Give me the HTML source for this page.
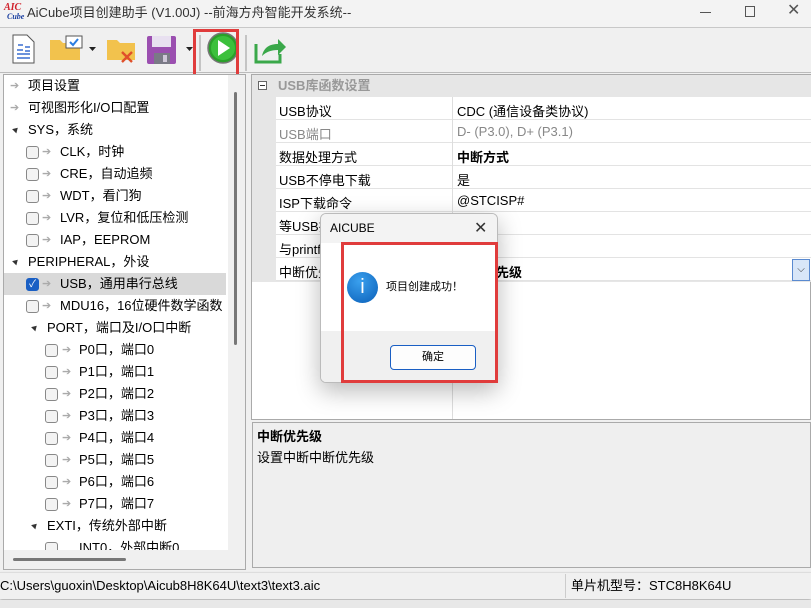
<!DOCTYPE html>
<html><head><meta charset="utf-8">
<style>
*{margin:0;padding:0;box-sizing:border-box}
body{width:811px;height:608px;background:#f0f0f0;position:relative;overflow:hidden;font-family:"Liberation Sans","Noto Sans CJK SC",sans-serif;font-size:13px;color:#000}
.a{position:absolute}
.t{position:absolute;white-space:nowrap;line-height:16px}
.cb{position:absolute;width:13px;height:13px;border:1px solid #888;border-radius:3px;background:#f3f3f3}
.ar{position:absolute;color:#aaa;font-size:11px}
.tri{position:absolute;width:0;height:0;border-left:3px solid transparent;border-right:3px solid transparent;border-bottom:5px solid #333;transform:rotate(45deg)}
.row{position:absolute;left:276px;width:535px;height:23px;border-bottom:1px solid #e3e3e3;background:#fff}
.row .n{position:absolute;left:3px;top:4px;white-space:nowrap}
.row .v{position:absolute;left:181px;top:4px;white-space:nowrap}
</style></head><body>
<div class="a" style="left:0;top:0;width:811px;height:28px;background:#f3f3f3;border-bottom:1px solid #c8c8c8"></div>
<div class="t" style="left:4px;top:3px;font:bold italic 10px 'Liberation Serif',serif;color:#d0202a;line-height:10px">AIC</div>
<div class="t" style="left:7px;top:13px;font:bold italic 8px 'Liberation Serif',serif;color:#1a3fa0;line-height:8px">Cube</div>
<div class="t" style="left:27px;top:5px;font-size:13px;color:#333">AiCube项目创建助手 (V1.00J) --前海方舟智能开发系统--</div>
<div class="a" style="left:700px;top:12px;width:11px;height:1px;background:#555"></div>
<div class="a" style="left:745px;top:6px;width:10px;height:11px;border:1px solid #555"></div>
<div class="t" style="left:787px;top:3px;font-size:16px;color:#555">✕</div>
<div class="a" style="left:0;top:72px;width:811px;height:1px;background:#bbb"></div>
<svg class="a" style="left:0;top:28px" width="300" height="46">
<path d="M13 7h14l7 7v21H13z" fill="#fff" stroke="#555"/><path d="M18 17h5M17 22h6M17 26h13M17 30h13M25 19h5M25 23h5" stroke="#3a6fd0" stroke-width="1.4"/>
<path d="M50 12h10l3 3h17v17H50z" fill="#f2c24d"/><rect x="66" y="8" width="16" height="12" fill="#fff" stroke="#555"/><path d="M70 14l3 3 5-6" stroke="#2a7de1" stroke-width="2" fill="none"/>
<path d="M89 19h7l-3.5 4z" fill="#222"/>
<path d="M107 12h10l3 3h15v17h-28z" fill="#f2c24d"/><path d="M122 24l10 10M132 24l-10 10" stroke="#e0502a" stroke-width="2.4"/>
<rect x="147" y="8" width="29" height="28" rx="2" fill="#9b4fb0"/><rect x="152" y="8" width="19" height="11" fill="#e8e0f0"/><rect x="154" y="25" width="16" height="11" fill="#7a7a86"/><rect x="163" y="27" width="4" height="7" fill="#cfc8d8"/>
<path d="M186 19h7l-3.5 4z" fill="#222"/>
<path d="M200 7v36M246 7v36" stroke="#999"/>
<circle cx="223" cy="20" r="15" fill="#2aa02a" stroke="#777" stroke-width="1.5"/><circle cx="223" cy="20" r="12" fill="#3cc03c"/><path d="M218 12v16l12-8z" fill="#fff"/>
<path d="M256 16v18h24v-8" stroke="#3aa84a" stroke-width="3" fill="none"/><path d="M262 28c2-9 8-12 16-12v-5l8 8-8 8v-5c-7 0-12 2-16 6z" fill="#3aa84a"/>
</svg>
<div class="a" style="left:193px;top:29px;width:46px;height:49px;border:3px solid #e03c3c"></div>
<div class="a" style="left:3px;top:74px;width:243px;height:496px;border:1px solid #aaa;background:#fff"></div>
<div class="a" style="left:228px;top:75px;width:17px;height:475px;background:#f0f0f0"></div>
<div class="a" style="left:234px;top:92px;width:3px;height:253px;background:#777;border-radius:2px"></div>
<div class="a" style="left:4px;top:550px;width:241px;height:19px;background:#f0f0f0"></div>
<div class="a" style="left:13px;top:558px;width:113px;height:3px;background:#777;border-radius:2px"></div>
<div class="a" style="left:4px;top:273px;width:222px;height:22px;background:#d9d9d9"></div>
<div class="ar" style="left:10px;top:79px">➔</div><div class="t" style="left:28px;top:78px">项目设置</div>
<div class="ar" style="left:10px;top:101px">➔</div><div class="t" style="left:28px;top:100px">可视图形化I/O口配置</div>
<div class="tri" style="left:13px;top:127px"></div><div class="t" style="left:28px;top:122px">SYS，系统</div>
<div class="cb" style="left:26px;top:146px"></div><div class="ar" style="left:42px;top:145px">➔</div><div class="t" style="left:60px;top:144px">CLK，时钟</div>
<div class="cb" style="left:26px;top:168px"></div><div class="ar" style="left:42px;top:167px">➔</div><div class="t" style="left:60px;top:166px">CRE，自动追频</div>
<div class="cb" style="left:26px;top:190px"></div><div class="ar" style="left:42px;top:189px">➔</div><div class="t" style="left:60px;top:188px">WDT，看门狗</div>
<div class="cb" style="left:26px;top:212px"></div><div class="ar" style="left:42px;top:211px">➔</div><div class="t" style="left:60px;top:210px">LVR，复位和低压检测</div>
<div class="cb" style="left:26px;top:234px"></div><div class="ar" style="left:42px;top:233px">➔</div><div class="t" style="left:60px;top:232px">IAP，EEPROM</div>
<div class="tri" style="left:13px;top:259px"></div><div class="t" style="left:28px;top:254px">PERIPHERAL，外设</div>
<div class="cb" style="left:26px;top:278px;background:#1a5fc4;border-color:#1a5fc4;color:#fff;font-size:10px;line-height:11px;text-align:center">✓</div><div class="ar" style="left:42px;top:277px">➔</div><div class="t" style="left:60px;top:276px">USB，通用串行总线</div>
<div class="cb" style="left:26px;top:300px"></div><div class="ar" style="left:42px;top:299px">➔</div><div class="t" style="left:60px;top:298px;width:166px;overflow:hidden">MDU16，16位硬件数学函数</div>
<div class="tri" style="left:32px;top:325px"></div><div class="t" style="left:47px;top:320px">PORT，端口及I/O口中断</div>
<div class="cb" style="left:45px;top:344px"></div><div class="ar" style="left:62px;top:343px">➔</div><div class="t" style="left:79px;top:342px">P0口，端口0</div>
<div class="cb" style="left:45px;top:366px"></div><div class="ar" style="left:62px;top:365px">➔</div><div class="t" style="left:79px;top:364px">P1口，端口1</div>
<div class="cb" style="left:45px;top:388px"></div><div class="ar" style="left:62px;top:387px">➔</div><div class="t" style="left:79px;top:386px">P2口，端口2</div>
<div class="cb" style="left:45px;top:410px"></div><div class="ar" style="left:62px;top:409px">➔</div><div class="t" style="left:79px;top:408px">P3口，端口3</div>
<div class="cb" style="left:45px;top:432px"></div><div class="ar" style="left:62px;top:431px">➔</div><div class="t" style="left:79px;top:430px">P4口，端口4</div>
<div class="cb" style="left:45px;top:454px"></div><div class="ar" style="left:62px;top:453px">➔</div><div class="t" style="left:79px;top:452px">P5口，端口5</div>
<div class="cb" style="left:45px;top:476px"></div><div class="ar" style="left:62px;top:475px">➔</div><div class="t" style="left:79px;top:474px">P6口，端口6</div>
<div class="cb" style="left:45px;top:498px"></div><div class="ar" style="left:62px;top:497px">➔</div><div class="t" style="left:79px;top:496px">P7口，端口7</div>
<div class="tri" style="left:32px;top:523px"></div><div class="t" style="left:47px;top:518px">EXTI，传统外部中断</div>
<div class="a" style="left:4px;top:538px;width:224px;height:12px;overflow:hidden"><div class="cb" style="left:41px;top:4px"></div><div class="t" style="left:75px;top:2px">INT0，外部中断0</div></div>
<div class="a" style="left:251px;top:74px;width:560px;height:346px;border:1px solid #aaa;background:#fff"></div>
<div class="a" style="left:252px;top:75px;width:559px;height:207px;background:#e6e6e6"></div>
<div class="a" style="left:258px;top:81px;width:9px;height:9px;border:1px solid #666;background:#fff"></div><div class="a" style="left:260px;top:85px;width:5px;height:1px;background:#333"></div>
<div class="t" style="left:278px;top:78px;font-weight:bold;color:#999">USB库函数设置</div>
<div class="row" style="top:97px"><span class="n">USB协议</span><span class="v">CDC (通信设备类协议)</span></div>
<div class="row" style="top:120px;color:#888"><span class="n">USB端口</span><span class="v">D- (P3.0), D+ (P3.1)</span></div>
<div class="row" style="top:143px"><span class="n">数据处理方式</span><span class="v" style="font-weight:bold">中断方式</span></div>
<div class="row" style="top:166px"><span class="n">USB不停电下载</span><span class="v">是</span></div>
<div class="row" style="top:189px"><span class="n">ISP下载命令</span><span class="v">@STCISP#</span></div>
<div class="row" style="top:212px"><span class="n">等USB插入</span><span class="v"></span></div>
<div class="row" style="top:235px"><span class="n">与printf</span><span class="v"></span></div>
<div class="row" style="top:258px"><span class="n">中断优先级</span><span class="v" style="font-weight:bold">中断优先级</span></div>
<div class="a" style="left:792px;top:259px;width:18px;height:22px;border:1px solid #5a8ad0;background:#d8e6f8;font-size:10px;text-align:center;line-height:20px;color:#333">⌵</div>
<div class="a" style="left:452px;top:97px;width:1px;height:322px;background:#ddd"></div>
<div class="a" style="left:252px;top:422px;width:559px;height:146px;border:1px solid #aaa;background:#efefef"></div>
<div class="t" style="left:257px;top:429px;font-weight:bold">中断优先级</div>
<div class="t" style="left:257px;top:450px">设置中断中断优先级</div>
<div class="a" style="left:0;top:572px;width:811px;height:27px;background:#f0f0f0;border-top:1px solid #ddd;box-shadow:0 2px 3px rgba(0,0,0,.25)"></div>
<div class="t" style="left:0;top:578px">C:\Users\guoxin\Desktop\Aicub8H8K64U\text3\text3.aic</div>
<div class="a" style="left:565px;top:574px;width:1px;height:24px;background:#ccc"></div>
<div class="t" style="left:571px;top:578px">单片机型号：STC8H8K64U</div>
<div class="a" style="left:0;top:600px;width:811px;height:8px;background:#e8e8e8"></div>
<div class="a" style="left:320px;top:213px;width:178px;height:170px;border:1px solid #bbb;border-radius:6px;background:#fff;box-shadow:0 8px 24px rgba(0,0,0,.28);overflow:hidden">
<div class="a" style="left:0;top:0;width:178px;height:29px;background:#f3f3f3"></div>
<div class="a" style="left:0;top:117px;width:178px;height:53px;background:#f0f0f0"></div>
</div>
<div class="t" style="left:330px;top:220px;font-size:12px">AICUBE</div>
<div class="t" style="left:474px;top:221px;font-size:16px;color:#333">✕</div>
<div class="a" style="left:347px;top:272px;width:31px;height:31px;border-radius:50%;background:radial-gradient(circle at 40% 30%,#3aa0ee,#0a5fb8);color:#fff;font:20px 'Liberation Sans';text-align:center;line-height:31px">i</div>
<div class="t" style="left:386px;top:279px;font-size:11px">项目创建成功！</div>
<div class="a" style="left:390px;top:345px;width:86px;height:25px;border:1px solid #1a5fc4;border-radius:4px;background:#fdfdfd;font-size:11px;text-align:center;line-height:23px">确定</div>
<div class="a" style="left:341px;top:242px;width:157px;height:141px;border:3px solid #e03c3c"></div>
</body></html>
